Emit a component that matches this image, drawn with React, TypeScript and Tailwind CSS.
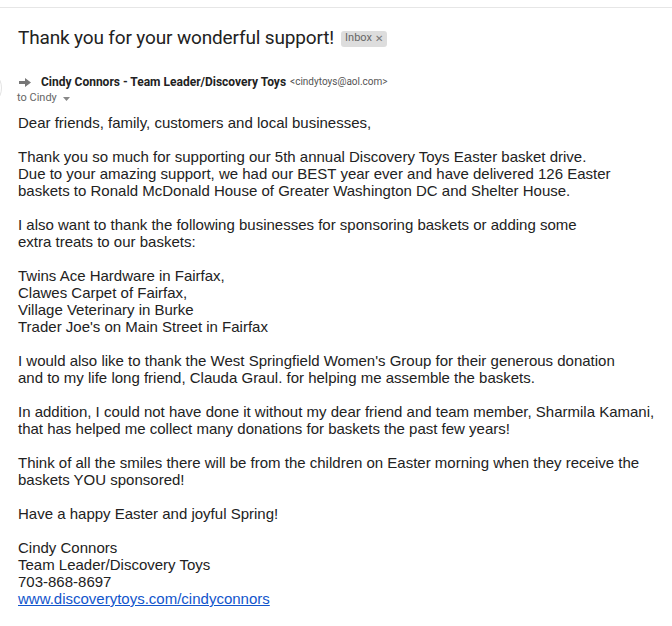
export default function App() {
  const body = 'font-["Liberation_Sans",Arial,sans-serif] text-[15px] leading-[17px] text-[#222]'
  return (
    <div className="w-[672px] h-[626px] bg-white overflow-hidden relative">
      <div className="h-[7px]" />
      <div className="border-t border-[#e6e6e6]" />

      <div className="flex items-center pl-[18px] pt-[18px]">
        <h1 className='font-["Roboto",sans-serif] text-[19px] tracking-[-0.15px] leading-[24px] text-[#222] font-normal'>
          Thank you for your wonderful support!
        </h1>
        <span className='ml-[7px] mt-[1px] flex items-center gap-[3px] rounded-[3px] bg-[#dddddd] px-[4px] h-[16px] font-["Roboto",sans-serif] text-[11px] text-[#666]'>
          Inbox
          <span className="text-[10px] text-[#777]">✕</span>
        </span>
      </div>

      <div className="relative mt-[24px]">
        <div className="absolute left-[-38px] top-[-6px] h-[40px] w-[40px] rounded-full border border-[#e3e3e3] bg-white" />
        <div className="flex items-center pl-[19px]">
          <svg width="12" height="9" viewBox="0 0 12 9" className="mr-[10px]">
            <path d="M0 3h6V0l6 4.5-6 4.5V6H0z" fill="#777" />
          </svg>
          <span className='font-["Roboto",sans-serif] text-[12px] font-bold text-[#222] leading-[16px]'>
            Cindy Connors - Team Leader/Discovery Toys
          </span>
          <span className='ml-[4px] font-["Roboto",sans-serif] text-[10px] text-[#555] leading-[16px]'>
            &lt;cindytoys@aol.com&gt;
          </span>
        </div>
        <div className='flex items-center pl-[17px] font-["Roboto",sans-serif] text-[11px] text-[#666] leading-[16px]'>
          to Cindy
          <svg width="7" height="4" viewBox="0 0 7 4" className="ml-[6px] mt-[2px]">
            <path d="M0 0h7L3.5 4z" fill="#888" />
          </svg>
        </div>
      </div>

      <div className={`${body} pl-[18px] pt-[8px]`}>
        <p>Dear friends, family, customers and local businesses,</p>
        <br />
        <p>
          Thank you so much for supporting our 5th annual Discovery Toys Easter basket drive.
          <br />
          Due to your amazing support, we had our BEST year ever and have delivered 126 Easter
          <br />
          baskets to Ronald McDonald House of Greater Washington DC and Shelter House.
        </p>
        <br />
        <p>
          I also want to thank the following businesses for sponsoring baskets or adding some
          <br />
          extra treats to our baskets:
        </p>
        <br />
        <p>
          Twins Ace Hardware in Fairfax,
          <br />
          Clawes Carpet of Fairfax,
          <br />
          Village Veterinary in Burke
          <br />
          Trader Joe's on Main Street in Fairfax
        </p>
        <br />
        <p>
          I would also like to thank the West Springfield Women's Group for their generous donation
          <br />
          and to my life long friend, Clauda Graul. for helping me assemble the baskets.
        </p>
        <br />
        <p>
          In addition, I could not have done it without my dear friend and team member, Sharmila Kamani,
          <br />
          that has helped me collect many donations for baskets the past few years!
        </p>
        <br />
        <p>
          Think of all the smiles there will be from the children on Easter morning when they receive the
          <br />
          baskets YOU sponsored!
        </p>
        <br />
        <p>Have a happy Easter and joyful Spring!</p>
        <br />
        <p>
          Cindy Connors
          <br />
          Team Leader/Discovery Toys
          <br />
          703-868-8697
          <br />
          <a href="#" className="text-[#1155cc] underline">
            www.discoverytoys.com/cindyconnors
          </a>
        </p>
      </div>
    </div>
  )
}
